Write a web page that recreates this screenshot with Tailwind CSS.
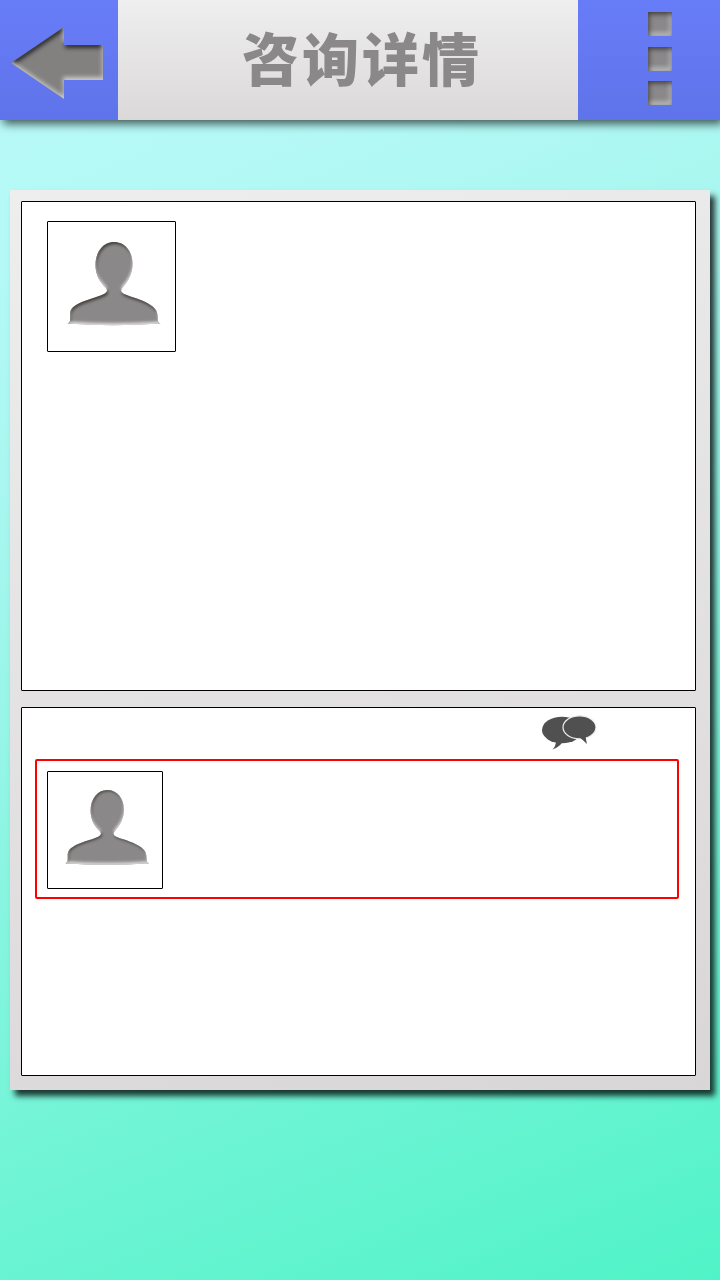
<!DOCTYPE html>
<html lang="zh-CN">
<head>
<meta charset="utf-8">
<title>咨询详情</title>
<script src="https://cdn.jsdelivr.net/npm/@tailwindcss/browser@4"></script>
</head>
<body class="w-[720px] h-[1280px] overflow-hidden bg-[linear-gradient(158deg,#b8fafa_0%,#b5f9f6_15%,#a5f6ee_35%,#50f3c7_100%)] font-['Noto_Sans_CJK_SC',sans-serif]">
<svg class="absolute size-0" aria-hidden="true">
  <defs>
    <filter id="inset" x="-10%" y="-10%" width="120%" height="120%" color-interpolation-filters="sRGB">
      <feGaussianBlur in="SourceAlpha" stdDeviation="2.2" result="b"/>
      <feOffset in="b" dx="0.6" dy="2.6" result="d"/>
      <feComposite in="SourceAlpha" in2="d" operator="out" result="dark"/>
      <feFlood flood-color="#1c1c1c" flood-opacity=".85"/>
      <feComposite in2="dark" operator="in" result="darkc"/>
      <feOffset in="b" dx="-1" dy="-2.6" result="l"/>
      <feComposite in="SourceAlpha" in2="l" operator="out" result="light"/>
      <feFlood flood-color="#d4d2d0" flood-opacity=".9"/>
      <feComposite in2="light" operator="in" result="lightc"/>
      <feMerge><feMergeNode in="SourceGraphic"/><feMergeNode in="darkc"/><feMergeNode in="lightc"/></feMerge>
    </filter>
    <filter id="insetPerson" x="-10%" y="-10%" width="120%" height="120%" color-interpolation-filters="sRGB">
      <feGaussianBlur in="SourceAlpha" stdDeviation="1.8" result="b"/>
      <feOffset in="b" dx="0.7" dy="1.6" result="d"/>
      <feComposite in="SourceAlpha" in2="d" operator="out" result="dark"/>
      <feFlood flood-color="#2a2620" flood-opacity=".8"/>
      <feComposite in2="dark" operator="in" result="darkc"/>
      <feOffset in="b" dx="0" dy="-2.4" result="l"/>
      <feComposite in="SourceAlpha" in2="l" operator="out" result="light"/>
      <feFlood flood-color="#f4f2f0" flood-opacity=".85"/>
      <feComposite in2="light" operator="in" result="lightc"/>
      <feMerge result="m"><feMergeNode in="SourceGraphic"/><feMergeNode in="darkc"/><feMergeNode in="lightc"/></feMerge>
      <feGaussianBlur in="m" stdDeviation=".7"/>
    </filter>
    <symbol id="person" viewBox="0 0 129 131">
      <path filter="url(#insetPerson)" fill="#8b8889" d="M67 21C56 21 48.500 31 48.500 44C48.500 54 53 61 58 66C61 69 60.500 71 57 73C48 77 37 79 29 84C24 87 23 90 23 94L23 100Q22 102 20.500 102.500Q65 106 113.500 102.500Q111 102 111 100L110.500 94C110 89 107 86 102 83C94 78 84 76 77 73C73.500 71 73.500 69 76 66C81 60 85.500 53 85.500 43C85.500 30 78 21 67 21Z"/>
    </symbol>
  </defs>
</svg>

<header class="relative flex h-[120px] bg-linear-to-b from-[#677cf7] to-[#5f74ea] shadow-[3px_4px_9px_rgba(0,0,0,0.65)]">
  <button class="flex w-[118px]" aria-label="返回">
    <svg class="w-[118px] h-[120px]" viewBox="0 0 118 120"><path filter="url(#inset)" fill="#838180" d="M11 63L64 27V45H103V80H64V99Z"/></svg>
  </button>
  <h1 class="w-[460px] h-[120px] pl-[124px] bg-linear-to-b from-[#efefef] to-[#dbd8d9] text-[57px] leading-[113px] tracking-[3px] font-black text-[#8b8889]">咨询详情</h1>
  <button class="flex flex-1 flex-col items-center gap-[10.500px] pt-3 pl-[22px]" aria-label="更多">
    <span class="size-6 bg-[#8a888a] shadow-[inset_1px_2px_5px_rgba(35,30,30,0.75),inset_-2px_-3px_5px_rgba(220,220,220,0.75)]"></span>
    <span class="size-6 bg-[#8a888a] shadow-[inset_1px_2px_5px_rgba(35,30,30,0.75),inset_-2px_-3px_5px_rgba(220,220,220,0.75)]"></span>
    <span class="size-6 bg-[#8a888a] shadow-[inset_1px_2px_5px_rgba(35,30,30,0.75),inset_-2px_-3px_5px_rgba(220,220,220,0.75)]"></span>
  </button>
</header>

<main class="mt-[70px] ml-[10px] flex h-[900px] w-[700px] flex-col gap-4 bg-[linear-gradient(165deg,#eeeeee,#d9d6d7)] pt-[11px] pl-[11px] shadow-[5px_6px_6px_rgba(0,0,0,0.78)]">
  <section class="h-[490px] w-[675px] rounded-[1px] border border-black bg-white pt-[19px] pl-[25px]">
    <div class="h-[131px] w-[129px] rounded-[1px] border border-black">
      <svg class="-m-px h-[131px] w-[129px]"><use href="#person"/></svg>
    </div>
  </section>
  <section class="flex h-[369px] w-[675px] flex-col rounded-[1px] border border-black bg-white pl-[13px]">
    <div class="h-[51px] pl-[504px] pt-[5px]">
      <svg class="h-[38px] w-[60px]" viewBox="539 713 60 38" fill="#505050">
        <ellipse cx="562" cy="730" rx="20" ry="13.300"/>
        <path d="M556 741Q556 746 552.500 749.500Q560 747 563 741Z"/>
        <ellipse cx="579.500" cy="727.300" rx="16.500" ry="11.500" stroke="#eee" stroke-width="1.200"/>
        <path d="M579 737Q583 740 587 744Q586 740 585.500 736Z"/>
      </svg>
    </div>
    <div class="h-[140px] w-[644px] rounded-[2px] border-2 border-[#f00] pt-[10px] pl-[10px]">
      <div class="h-[118px] w-[116px] rounded-[1px] border border-black">
        <svg class="-m-px h-[118px] w-[116px]"><use href="#person"/></svg>
      </div>
    </div>
  </section>
</main>
</body>
</html>
